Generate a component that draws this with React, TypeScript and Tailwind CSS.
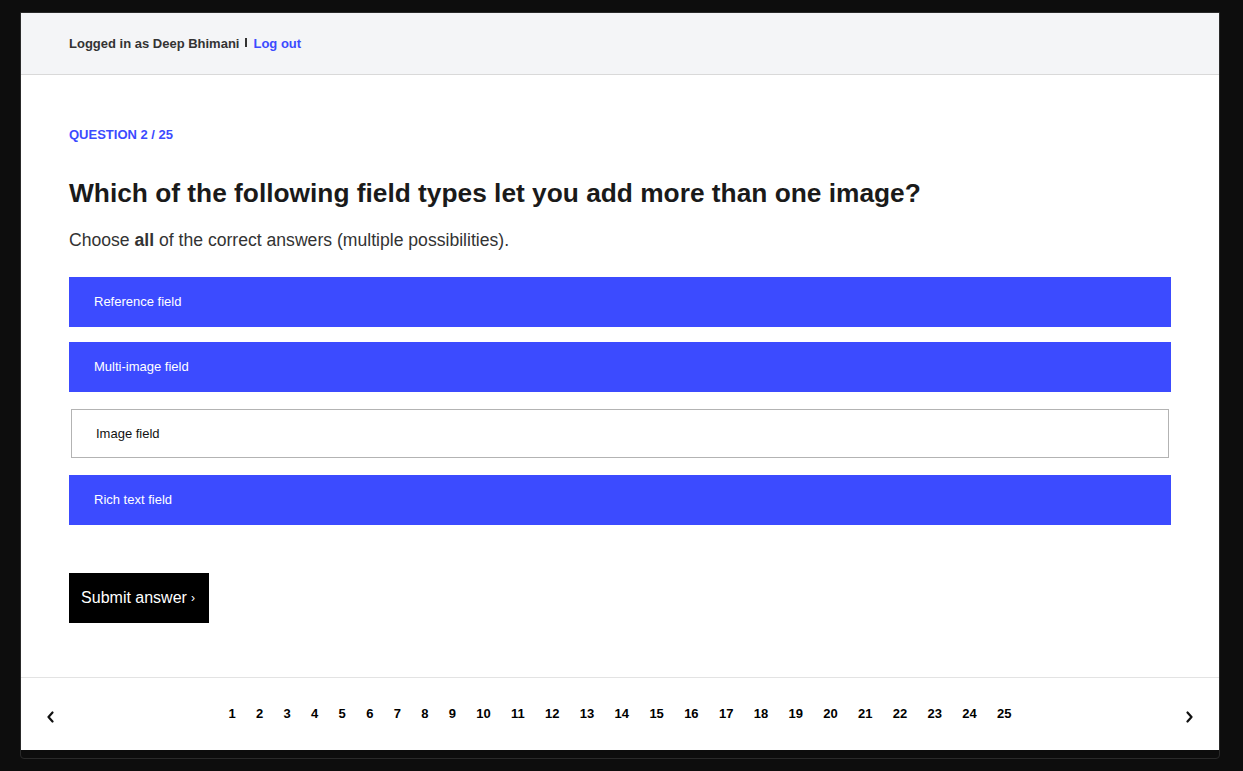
import React from 'react';

const options = [
  { label: 'Reference field', selected: true },
  { label: 'Multi-image field', selected: true },
  { label: 'Image field', selected: false },
  { label: 'Rich text field', selected: true },
];

const pages = Array.from({ length: 25 }, (_, i) => i + 1);

export default function App() {
  return (
    <div
      className="min-h-screen bg-[#0d0d0d] px-[20px] pt-[12px]"
      style={{ fontFamily: '"Liberation Sans", Arial, sans-serif' }}
    >
      <div className="w-[1200px] rounded-b-[4px] border border-[#2a2a2a] pb-[8px]">
        <div className="bg-white">
          <header className="flex h-[62px] items-center border-b border-[#d9d9d9] bg-[#f4f5f7] px-[48px] pt-[1px]">
            <span className="text-[13px] font-bold text-[#333333]">Logged in as Deep Bhimani</span>
            <span className="mb-[3px] ml-[6px] mr-[6px] inline-block h-[9px] w-[2px] bg-[#333333]" />
            <a href="#" className="text-[13px] font-bold text-[#3c4bff]">
              Log out
            </a>
          </header>

          <main className="px-[48px] pb-[54px] pt-[52px]">
            <p className="text-[13px] font-bold uppercase leading-[16px] text-[#3c4bff]">Question 2 / 25</p>
            <h1 className="mt-[34px] text-[26.3px] font-bold leading-[32px] text-[#1a1a1a]">
              Which of the following field types let you add more than one image?
            </h1>
            <p className="mt-[19px] text-[17.6px] leading-[24px] text-[#333333]">
              Choose <b>all</b> of the correct answers (multiple possibilities).
            </p>

            <div className="mt-[25px] flex flex-col">
              {options.map((o) =>
                o.selected ? (
                  <button
                    key={o.label}
                    type="button"
                    className="mb-[15px] flex h-[50px] items-center bg-[#3c4bff] pl-[25px] text-[13px] text-white last:mb-0"
                  >
                    {o.label}
                  </button>
                ) : (
                  <button
                    key={o.label}
                    type="button"
                    className="mx-[2px] mb-[17px] mt-[2px] flex h-[49px] items-center border border-[#b3b3b3] bg-white pl-[24px] text-[13px] text-[#111111]"
                  >
                    {o.label}
                  </button>
                )
              )}
            </div>

            <button
              type="button"
              className="mt-[48px] flex h-[50px] w-[140px] items-center justify-center bg-black pr-[2px] text-[16px] text-white"
            >
              Submit answer <span className="ml-[4px] text-[12px]">›</span>
            </button>
          </main>

          <footer className="flex h-[73px] items-center border-t border-[#e3e3e3] px-[25px]">
            <button type="button" className="mt-[6px] w-[10px]">
              <svg width="8" height="12" viewBox="0 0 8 12" fill="none">
                <path d="M6.5 1.5 L2.5 6 L6.5 10.5" stroke="#111" strokeWidth="2.2" strokeLinecap="round" strokeLinejoin="round" />
              </svg>
            </button>
            <div className="flex flex-1 justify-center gap-[20.3px] pb-[1px]">
              {pages.map((p) => (
                <span key={p} className="text-[13px] font-bold text-black">
                  {p}
                </span>
              ))}
            </div>
            <button type="button" className="mt-[6px] flex w-[10px] justify-end">
              <svg width="8" height="12" viewBox="0 0 8 12" fill="none">
                <path d="M1.5 1.5 L5.5 6 L1.5 10.5" stroke="#111" strokeWidth="2.2" strokeLinecap="round" strokeLinejoin="round" />
              </svg>
            </button>
          </footer>
        </div>
      </div>
    </div>
  );
}
